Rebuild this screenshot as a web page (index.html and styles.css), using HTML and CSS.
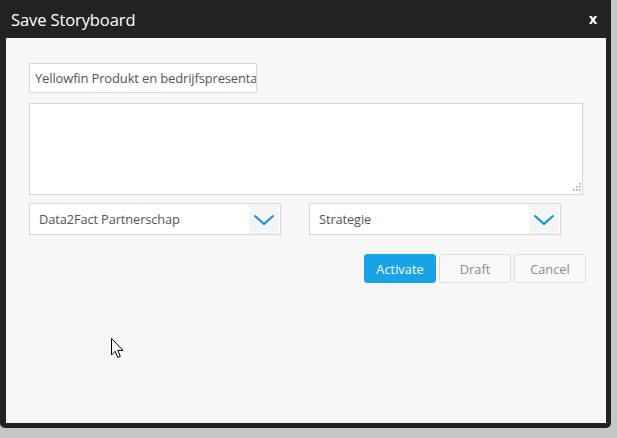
FILE: index.html
```html
<!DOCTYPE html>
<html>
<head>
<meta charset="utf-8">
<link rel="stylesheet" href="styles.css">
</head>
<body>
<div class="dialog">
  <div class="header">
    <span class="title">Save Storyboard</span>
    <span class="close">x</span>
  </div>
  <div class="content">
    <div class="name-row">
      <input class="field name" type="text" value="Yellowfin Produkt en bedrijfspresentatie" readonly>
    </div>
    <div class="field area">
      <svg class="grip" width="10" height="10" viewBox="0 0 10 10">
        <g fill="#9a9a9a">
          <rect x="8" y="0" width="1.5" height="1.5"/>
          <rect x="5" y="3" width="1.5" height="1.5"/>
          <rect x="8" y="3" width="1.5" height="1.5"/>
          <rect x="2" y="6" width="1.5" height="1.5"/>
          <rect x="5" y="6" width="1.5" height="1.5"/>
          <rect x="8" y="6" width="1.5" height="1.5"/>
        </g>
      </svg>
    </div>
    <div class="select-row">
      <div class="field select">
        <span class="sel-text">Data2Fact Partnerschap</span>
        <span class="chev"><svg width="22" height="12" viewBox="0 0 22 12"><path d="M1.5 1.5 L11 10 L20.5 1.5" fill="none" stroke="#1b95d4" stroke-width="2.2"/></svg></span>
      </div>
      <div class="field select">
        <span class="sel-text">Strategie</span>
        <span class="chev"><svg width="22" height="12" viewBox="0 0 22 12"><path d="M1.5 1.5 L11 10 L20.5 1.5" fill="none" stroke="#1b95d4" stroke-width="2.2"/></svg></span>
      </div>
    </div>
    <div class="button-row">
      <button class="btn primary">Activate</button>
      <button class="btn">Draft</button>
      <button class="btn">Cancel</button>
    </div>
  </div>
</div>
<svg class="cursor" width="13" height="21" viewBox="0 0 13 21">
  <path d="M0.5 0.5 L0.5 17 L4.2 13.3 L6.8 19.5 L9.3 18.4 L6.8 12.4 L12 12.4 Z" fill="#fff" stroke="#000" stroke-width="1"/>
</svg>
</body>
</html>
```

FILE: styles.css
```css
html, body {
  margin: 0;
  padding: 0;
}
body {
  background: #c6c6c6;
  width: 617px;
  height: 438px;
  overflow: hidden;
  position: relative;
  font-family: "Open Sans", "Liberation Sans", sans-serif;
}
.dialog {
  width: 611px;
  height: 428px;
  background: #222222;
  border-radius: 0 0 5px 5px;
  box-sizing: border-box;
  padding: 0 5px 5px 6px;
  display: flex;
  flex-direction: column;
}
.header {
  height: 38px;
  display: flex;
  align-items: center;
  justify-content: space-between;
  padding: 0 9px 0 5px;
  color: #ffffff;
}
.title {
  font-size: 16.5px;
  letter-spacing: -0.1px;
  margin-top: 1px;
}
.close {
  font-size: 14px;
  font-weight: bold;
  margin-top: -2px;
}
.content {
  flex: 1;
  background: #f7f7f7;
  padding: 25px 23px 0 23px;
  display: flex;
  flex-direction: column;
}
.field {
  background: #ffffff;
  border: 1px solid #d6d6d6;
  box-sizing: border-box;
  color: #555555;
  font-family: "Open Sans", "Liberation Sans", sans-serif;
  font-size: 13px;
}
.name-row {
  display: flex;
}
.name {
  width: 228px;
  height: 30px;
  margin: 0;
  padding: 0 0 0 5px;
  outline: none;
  letter-spacing: -0.15px;
}
.area {
  margin-top: 10px;
  width: 554px;
  height: 92px;
  position: relative;
}
.grip {
  position: absolute;
  right: 1px;
  bottom: 1px;
}
.select-row {
  margin-top: 8px;
  display: flex;
  gap: 28px;
}
.select {
  width: 252px;
  height: 32px;
  display: flex;
  align-items: center;
  justify-content: space-between;
  padding-left: 9px;
  font-size: 12.8px;
  letter-spacing: -0.1px;
}
.chev {
  width: 30px;
  height: 30px;
  background: #f4f4f4;
  display: flex;
  align-items: center;
  justify-content: center;
  margin-right: 1px;
}
.chev svg {
  margin-top: 1px;
}
.button-row {
  margin-top: 19px;
  margin-right: -3px;
  display: flex;
  justify-content: flex-end;
  gap: 3px;
}
.btn {
  width: 72px;
  height: 29px;
  border: 1px solid #dcdcdc;
  border-radius: 3px;
  background: #f9f9f9;
  color: #8a8a8a;
  font-family: "Open Sans", "Liberation Sans", sans-serif;
  font-size: 12.8px;
  padding: 0;
}
.btn.primary {
  background: #16a3e8;
  border-color: #16a3e8;
  color: #ffffff;
}
.cursor {
  position: absolute;
  left: 111px;
  top: 338px;
}
```
